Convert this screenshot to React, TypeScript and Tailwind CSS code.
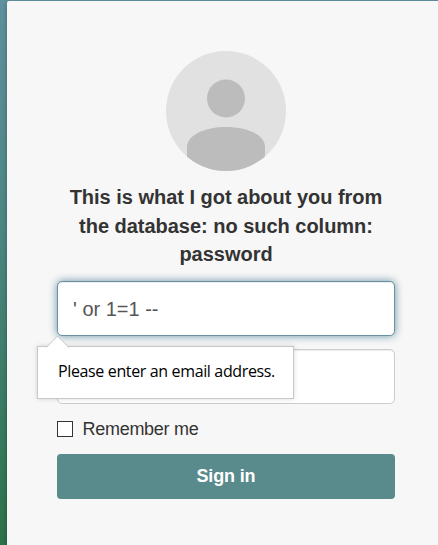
function Avatar() {
  return (
    <svg viewBox="0 0 120 120" className="block size-[120px] rounded-full" aria-hidden="true">
      <rect width="120" height="120" fill="#e1e1e1" />
      <circle cx="60" cy="47.5" r="19" fill="#bcbcbc" />
      <path d="M21 120V96C21 84 39 76 60 76S99 84 99 96V120Z" fill="#bcbcbc" />
    </svg>
  );
}

function ValidationMessage() {
  return (
    <div
      role="alert"
      className="absolute top-[65px] -left-5 z-10 h-[53px] w-[257px] border border-[#c8c8c8] bg-white shadow-[0_0_5px_rgba(0,0,0,0.15)]"
    >
      <svg viewBox="0 0 26 13" className="absolute -top-[12px] left-[7px] h-[13px] w-[26px]" aria-hidden="true">
        <path d="M1 13L12.5 1.5L24 13Z" fill="#fff" />
        <path d="M1 12.5L12.5 1L24 12.5" fill="none" stroke="#c8c8c8" />
      </svg>
      <p className="pl-5 pt-3 font-['Open_Sans','Noto_Sans',sans-serif] text-[16px] leading-6 tracking-[-0.36px] whitespace-nowrap text-black">
        Please enter an email address.
      </p>
    </div>
  );
}

export default function App() {
  return (
    <main className="h-[545px] w-[438px] overflow-hidden bg-linear-to-b from-[#5f909e] via-[#4b857f] via-45% to-[#2b7249] pt-px pl-[7px] font-['Liberation_Sans',Arial,sans-serif] text-[#333]">
      <section className="flex h-[560px] w-[438px] flex-col rounded-tl-[2px] bg-[#f7f7f7] pt-[50px] pl-[50px] shadow-[0_2px_4px_rgba(0,0,0,0.3)]">
        <div className="flex w-[338px] flex-col">
          <div className="flex justify-center">
            <Avatar />
          </div>
          <h1 className="mt-3 text-center text-[20px] leading-[28.57px] font-bold tracking-[-0.02px]">
            This is what I got about you from the database: no such column: password
          </h1>
          <form className="mt-3 flex flex-col">
            <div className="relative">
              <input
                aria-label="Email"
                defaultValue="' or 1=1 --"
                className="block h-[55px] w-full rounded-[5px] border border-[#6891a2] bg-white px-[15px] pt-[2px] text-[20px] text-[#555] shadow-[inset_0_1px_1px_rgba(0,0,0,0.075),0_0_8px_#6891a2] outline-none"
              />
              <ValidationMessage />
            </div>
            <input
              aria-label="Password"
              type="password"
              className="mt-[13px] block h-[55px] w-full rounded-[5px] border border-[#ccc] bg-white px-[15px] shadow-[inset_0_1px_1px_rgba(0,0,0,0.075)] outline-none"
            />
            <label className="mt-[12px] flex h-[26px] items-center gap-[9.5px] text-[18px] tracking-[-0.28px]">
              <input type="checkbox" className="size-4 appearance-none border border-[#333] bg-white" />
              <span className="pt-[2px]">Remember me</span>
            </label>
            <button type="button" className="mt-[12px] h-[45px] rounded-[4px] bg-[#598a8c] text-[18px] font-bold tracking-[-0.15px] text-white">
              Sign in
            </button>
          </form>
        </div>
      </section>
    </main>
  );
}
